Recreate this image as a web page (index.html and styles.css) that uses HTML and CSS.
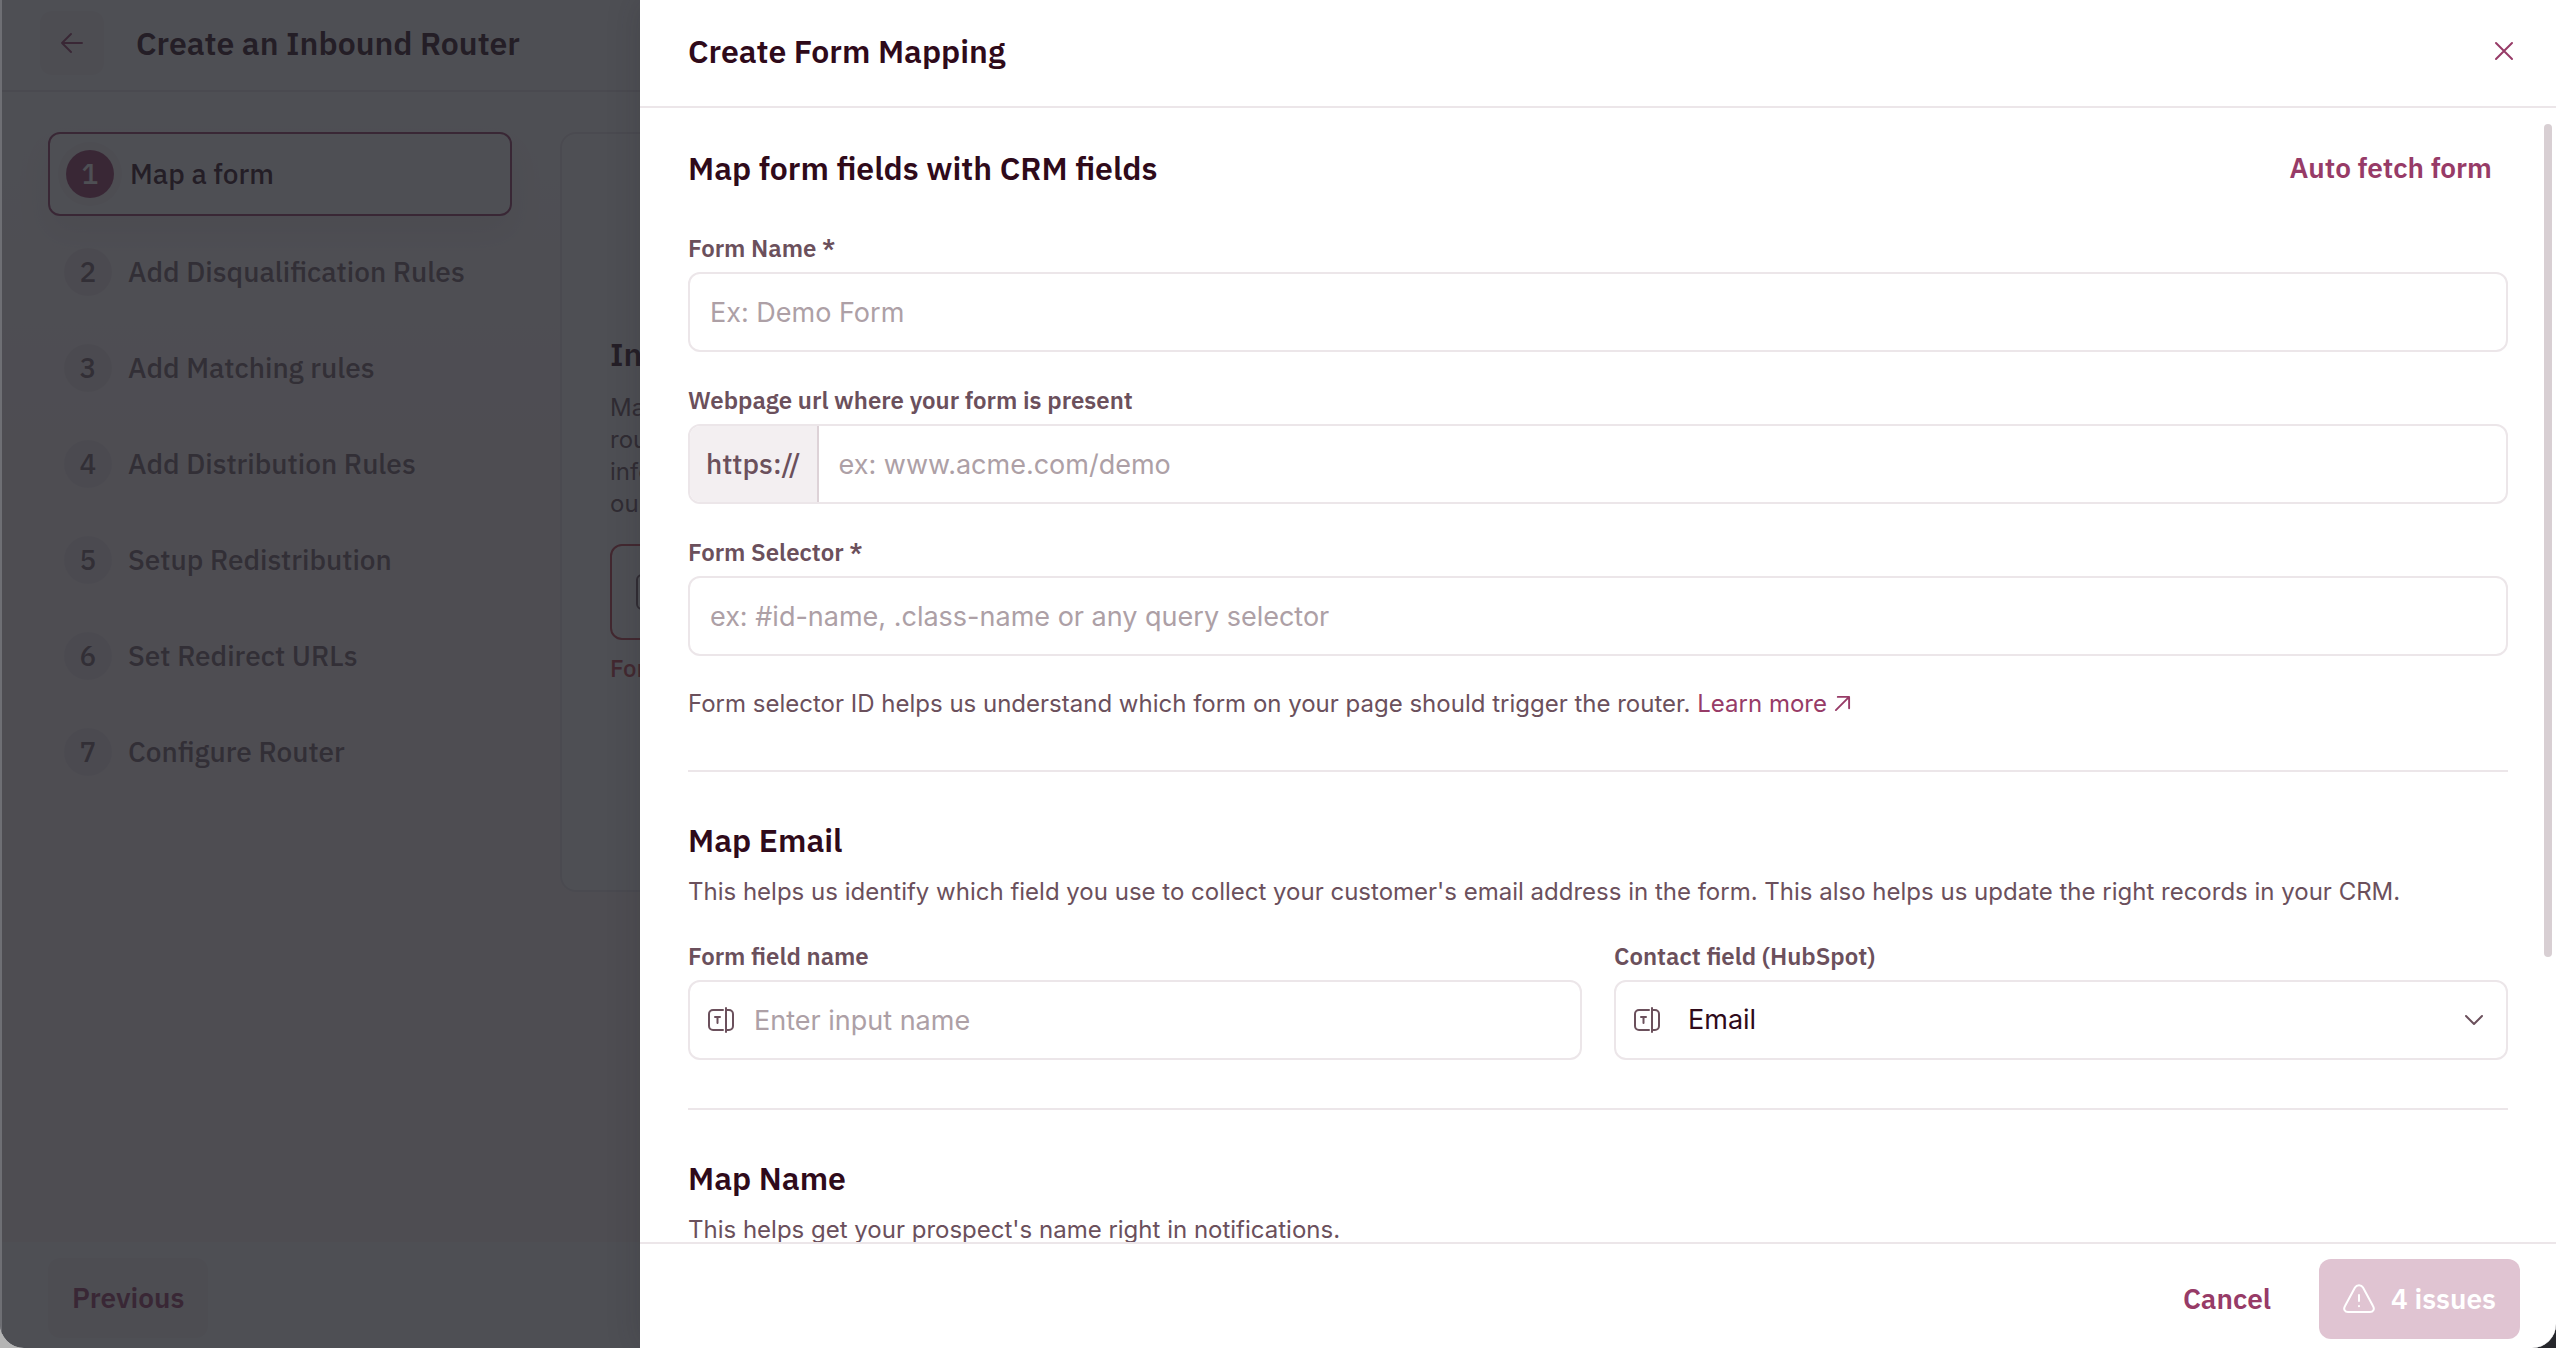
FILE: index.html
```html
<!DOCTYPE html>
<html lang="en">
<head>
    <meta charset="UTF-8">
    <meta name="viewport" content="width=device-width, initial-scale=1.0">
    <title>Create an Inbound Router</title>
    <link rel="stylesheet" href="styles.css">
</head>
<body>
    <div class="app">
        <header class="page-header">
            <button type="button" class="back-button" aria-label="Back">
                <svg width="24" height="24" viewBox="0 0 24 24" fill="none" stroke="currentColor" stroke-width="2" stroke-linecap="round" stroke-linejoin="round">
                    <path d="M22 12H2M11 3L2 12l9 9"/>
                </svg>
            </button>
            <h1>Create an Inbound Router</h1>
        </header>

        <main class="page-main">
            <ol class="steps">
                <li class="step active"><span class="step-number">1</span>Map a form</li>
                <li class="step"><span class="step-number">2</span>Add Disqualification Rules</li>
                <li class="step"><span class="step-number">3</span>Add Matching rules</li>
                <li class="step"><span class="step-number">4</span>Add Distribution Rules</li>
                <li class="step"><span class="step-number">5</span>Setup Redistribution</li>
                <li class="step"><span class="step-number">6</span>Set Redirect URLs</li>
                <li class="step"><span class="step-number">7</span>Configure Router</li>
            </ol>

            <section class="card">
                <h2>In</h2>
                <p>Ma<br>rou<br>info<br>our</p>
                <div class="card-select"><span class="card-icon"></span></div>
                <p class="card-error">Form</p>
            </section>
        </main>

        <footer class="page-footer">
            <button type="button" class="previous-button">Previous</button>
        </footer>

        <div class="overlay"></div>

        <div class="drawer" role="dialog" aria-labelledby="drawer-title">
            <header class="drawer-header">
                <h2 id="drawer-title">Create Form Mapping</h2>
                <button type="button" class="close-button" aria-label="Close">
                    <svg width="20" height="20" viewBox="0 0 20 20" fill="none" stroke="currentColor" stroke-width="2" stroke-linecap="round">
                        <path d="M2 2l16 16M18 2L2 18"/>
                    </svg>
                </button>
            </header>

            <form class="drawer-body" id="mapping-form">
                <section>
                    <div class="section-title">
                        <h3>Map form fields with CRM fields</h3>
                        <button type="button" class="text-button">Auto fetch form</button>
                    </div>
                    <div class="form-group">
                        <label for="form-name">Form Name *</label>
                        <div class="field">
                            <input type="text" id="form-name" placeholder="Ex: Demo Form">
                        </div>
                    </div>
                    <div class="form-group">
                        <label for="form-url">Webpage url where your form is present</label>
                        <div class="field">
                            <span class="prefix">https://</span>
                            <input type="text" id="form-url" placeholder="ex: www.acme.com/demo">
                        </div>
                    </div>
                    <div class="form-group">
                        <label for="form-selector">Form Selector *</label>
                        <div class="field">
                            <input type="text" id="form-selector" placeholder="ex: #id-name, .class-name or any query selector">
                        </div>
                    </div>
                    <p class="hint">Form selector ID helps us understand which form on your page should trigger the router.
                        <a href="#">Learn more
                            <svg width="17" height="17" viewBox="0 0 18 18" fill="none" stroke="currentColor" stroke-width="2" stroke-linecap="round" stroke-linejoin="round">
                                <path d="M2 16L16 2M4 2h12v12"/>
                            </svg></a>
                    </p>
                </section>

                <section>
                    <h3>Map Email</h3>
                    <p>This helps us identify which field you use to collect your customer's email address in the form. This also helps us update the right records in your CRM.</p>
                    <div class="form-row">
                        <div class="form-group">
                            <label for="email-input">Form field name</label>
                            <div class="field with-icon">
                                <svg width="26" height="26" viewBox="0 0 26 26" fill="none" stroke="currentColor" stroke-width="2" stroke-linecap="round" stroke-linejoin="round">
                                    <path d="M15 3H5a4 4 0 0 0-4 4v12a4 4 0 0 0 4 4h10M18 1v24M18 3h3a4 4 0 0 1 4 4v12a4 4 0 0 1-4 4h-3M7 10h5M9.500 10v6"/>
                                </svg>
                                <input type="text" id="email-input" placeholder="Enter input name">
                            </div>
                        </div>
                        <div class="form-group">
                            <label for="email-contact">Contact field (HubSpot)</label>
                            <div class="field with-icon">
                                <svg width="26" height="26" viewBox="0 0 26 26" fill="none" stroke="currentColor" stroke-width="2" stroke-linecap="round" stroke-linejoin="round">
                                    <path d="M15 3H5a4 4 0 0 0-4 4v12a4 4 0 0 0 4 4h10M18 1v24M18 3h3a4 4 0 0 1 4 4v12a4 4 0 0 1-4 4h-3M7 10h5M9.500 10v6"/>
                                </svg>
                                <select id="email-contact">
                                    <option>Email</option>
                                </select>
                                <svg width="20" height="12" viewBox="0 0 20 12" fill="none" stroke="currentColor" stroke-width="2" stroke-linecap="round" stroke-linejoin="round">
                                    <path d="M2 2l8 8 8-8"/>
                                </svg>
                            </div>
                        </div>
                    </div>
                </section>

                <section>
                    <h3>Map Name</h3>
                    <p>This helps get your prospect's name right in notifications.</p>
                </section>
            </form>
            <div class="scrollbar"></div>

            <footer class="drawer-footer">
                <button type="button" class="text-button">Cancel</button>
                <button type="submit" form="mapping-form" class="submit-button" disabled>
                    <svg width="32" height="30" viewBox="0 0 32 30" fill="none" stroke="currentColor" stroke-width="2" stroke-linecap="round" stroke-linejoin="round">
                        <path d="M12 3.500a4.600 4.600 0 0 1 8 0l10 18.500c2 3.500 0 6-3 6H5c-3 0-5-2.500-3-6z"/>
                        <path d="M16 11v6M16 22v.2"/>
                    </svg>
                    4 issues
                </button>
            </footer>
        </div>
    </div>
</body>
</html>
```

FILE: styles.css
```css
* {
    box-sizing: border-box;
}
body {
    margin: 0;
    background: linear-gradient(90deg, #b4b4b4 50%, #26272c 50%);
    font-family: Inter, sans-serif;
    font-size: 24px;
    line-height: 32px;
    color: #6b505c;
}
h1, h2, h3, p, ol {
    margin: 0;
    padding: 0;
}
h1, h2, h3 {
    font-family: "IBM Plex Sans", sans-serif;
    font-size: 32px;
    font-weight: 600;
    line-height: 40px;
    color: #2f0a1a;
}
button {
    display: flex;
    align-items: center;
    justify-content: center;
    border: none;
    border-radius: 12px;
    background: none;
    font: 600 28px/40px "IBM Plex Sans", sans-serif;
    color: #973b67;
    cursor: pointer;
}
svg {
    flex: none;
}
.app {
    position: relative;
    display: flex;
    flex-direction: column;
    height: 100vh;
    overflow: hidden;
    border-radius: 0 0 24px 24px;
    background-color: #fff;
}

/* Page behind the drawer */
.page-header {
    display: flex;
    align-items: center;
    gap: 32px;
    height: 92px;
    padding: 0 40px 4px;
    border-bottom: 2px solid #ece6e9;
}
.back-button {
    width: 64px;
    height: 64px;
    background-color: #f8f4f6;
}
.page-main {
    flex: 1;
    display: flex;
    gap: 48px;
    padding: 40px 48px;
    background: linear-gradient(#fff, #fdf3f6 30%);
}
.steps {
    display: flex;
    flex-direction: column;
    gap: 12px;
    width: 464px;
    list-style: none;
}
.step {
    display: flex;
    align-items: center;
    gap: 16px;
    height: 84px;
    padding: 0 16px;
    font: 500 28px/40px "IBM Plex Sans", sans-serif;
    color: #755f6b;
}
.step-number {
    width: 48px;
    height: 48px;
    border-radius: 50%;
    background-color: #f1e7eb;
    line-height: 48px;
    text-align: center;
}
.step.active {
    margin-bottom: 2px;
    border: 2px solid #973b67;
    border-radius: 12px;
    background-color: #fff;
    box-shadow: 0 16px 32px rgba(107, 80, 92, 0.1);
    color: #2f0a1a;
}
.step.active .step-number {
    background-color: #973b67;
    box-shadow: 0 0 0 8px #f8f2f5;
    color: #fff;
}
.card {
    flex: 1;
    align-self: flex-start;
    height: 760px;
    padding: 200px 48px 0;
    border: 2px solid #ece6e9;
    border-radius: 16px;
    background-color: #fff;
}
.card h2 {
    margin-bottom: 18px;
}
.card-select {
    display: flex;
    align-items: center;
    height: 96px;
    margin: 24px 0 12px;
    padding: 0 24px;
    border: 2px solid #c23e4b;
    border-radius: 12px;
}
.card-icon {
    width: 36px;
    height: 36px;
    border: 2px solid #6b505c;
    border-radius: 6px;
}
.card .card-error {
    font: 500 24px/32px "IBM Plex Sans", sans-serif;
    color: #c23e4b;
}
.page-footer {
    height: 106px;
    padding: 16px 48px;
    background-color: #fff;
}
.previous-button {
    height: 80px;
    padding: 0 24px;
    background-color: #f8f4f6;
}
.overlay {
    position: absolute;
    inset: 0;
    border-left: 2px solid #6e6f74;
    background-color: rgba(34, 35, 41, 0.8);
}

/* Drawer */
.drawer {
    position: absolute;
    top: 0;
    right: 0;
    bottom: 0;
    left: 640px;
    display: flex;
    flex-direction: column;
    background-color: #fff;
    box-shadow: 0 0 32px rgba(34, 35, 41, 0.2);
}
.drawer-header {
    display: flex;
    align-items: center;
    justify-content: space-between;
    height: 108px;
    padding: 0 32px 4px 48px;
    border-bottom: 2px solid #ece6e9;
}
.close-button {
    width: 40px;
    height: 40px;
    padding: 0;
}
.drawer-body {
    flex: 1;
    min-height: 0;
    overflow: hidden;
    padding: 40px 48px 0;
}
.drawer-body section {
    margin-bottom: 48px;
    padding-bottom: 48px;
    border-bottom: 2px solid #ece6e9;
}
.drawer-body section:last-child {
    border-bottom: none;
}
.section-title {
    display: flex;
    align-items: center;
    justify-content: space-between;
    margin-bottom: 44px;
}
.text-button {
    padding: 0 16px;
}
h3 + p {
    margin: 16px 0 32px;
}
.form-group {
    flex: 1;
    margin-bottom: 32px;
}
.form-group label {
    display: block;
    margin-bottom: 8px;
    font: 600 24px/32px "IBM Plex Sans", sans-serif;
}
.field {
    display: flex;
    align-items: center;
    height: 80px;
    overflow: hidden;
    border: 2px solid #ece6e9;
    border-radius: 12px;
}
.field input, .field select {
    flex: 1;
    min-width: 0;
    height: 76px;
    padding: 0 20px;
    border: none;
    outline: none;
    appearance: none;
    background: none;
    font: 400 27px/40px Inter, sans-serif;
    color: #2f0a1a;
}
.field input::placeholder {
    color: #ada0a6;
}
.prefix {
    height: 76px;
    padding: 0 16px;
    border-right: 2px solid #ddd2d7;
    background-color: #f3eff1;
    font: 500 28px/76px "IBM Plex Sans", sans-serif;
}
.with-icon {
    padding: 0 22px 0 18px;
}
.with-icon select {
    padding: 0 28px;
}
.hint {
    padding-bottom: 2px;
}
.hint a {
    color: #973b67;
    text-decoration: none;
}
.form-row {
    display: flex;
    gap: 32px;
}
.form-row .form-group {
    margin-bottom: 0;
}
.scrollbar {
    position: absolute;
    top: 124px;
    right: 4px;
    width: 8px;
    height: 833px;
    border-radius: 4px;
    background-color: #d8cfd3;
}
.drawer-footer {
    display: flex;
    align-items: center;
    justify-content: flex-end;
    gap: 32px;
    height: 106px;
    padding: 6px 36px 0;
    border-top: 2px solid #ece6e9;
}
.submit-button {
    gap: 16px;
    height: 80px;
    padding: 0 24px;
    background-color: #e0c4d2;
    color: #fff;
}
```
